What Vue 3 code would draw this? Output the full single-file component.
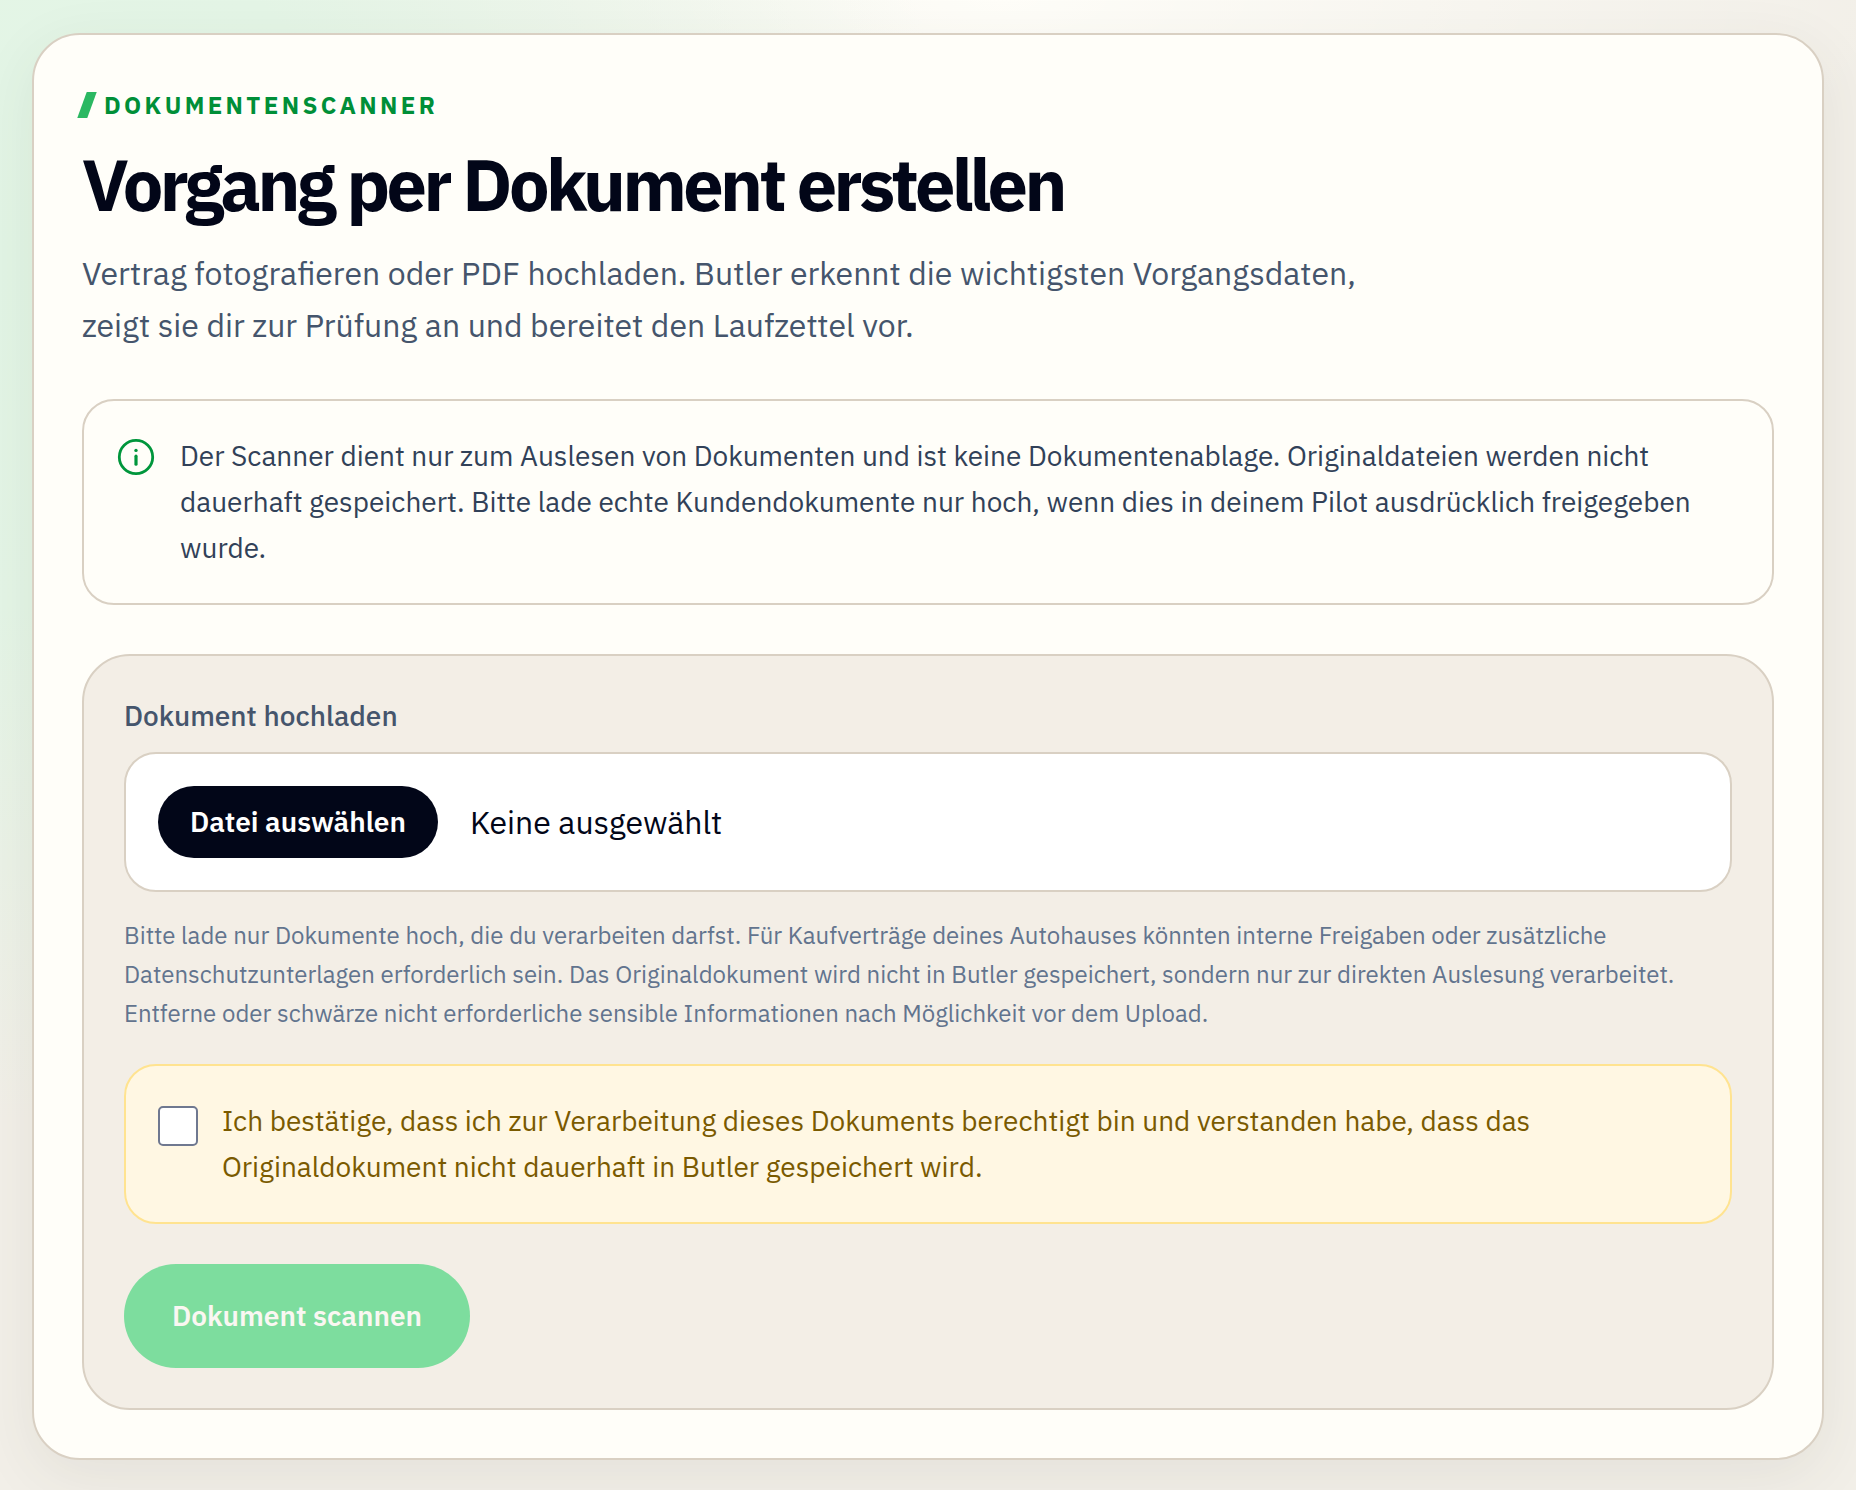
<script setup>
import { ref } from 'vue'

const fileInput = ref(null)
const fileName = ref('')
const confirmed = ref(false)

function onFileChange(event) {
  fileName.value = event.target.files[0]?.name ?? ''
}
</script>

<template>
  <div class="page">
    <main class="card">
      <p class="eyebrow">Dokumentenscanner</p>
      <h1 class="title">Vorgang per Dokument erstellen</h1>
      <p class="lead">
        Vertrag fotografieren oder PDF hochladen. Butler erkennt die wichtigsten Vorgangsdaten,
        zeigt sie dir zur Prüfung an und bereitet den Laufzettel vor.
      </p>

      <div class="notice">
        <svg class="notice-icon" viewBox="0 0 40 40" fill="none" aria-hidden="true">
          <circle cx="20" cy="20" r="16.7" stroke="currentColor" stroke-width="2.8" />
          <path d="M20 19.2v8" stroke="currentColor" stroke-width="3.2" stroke-linecap="round" />
          <circle cx="20" cy="13.4" r="1.7" fill="currentColor" />
        </svg>
        <p>
          Der Scanner dient nur zum Auslesen von Dokumenten und ist keine Dokumentenablage.
          Originaldateien werden nicht dauerhaft gespeichert. Bitte lade echte Kundendokumente nur
          hoch, wenn dies in deinem Pilot ausdrücklich freigegeben wurde.
        </p>
      </div>

      <form class="panel" @submit.prevent>
        <label class="field-label" for="document">Dokument hochladen</label>
        <div class="file-box">
          <input id="document" ref="fileInput" class="file-native" type="file" @change="onFileChange" />
          <button class="file-button" type="button" @click="fileInput.click()">Datei auswählen</button>
          <span>{{ fileName || 'Keine ausgewählt' }}</span>
        </div>
        <p class="hint">
          Bitte lade nur Dokumente hoch, die du verarbeiten darfst. Für Kaufverträge deines
          Autohauses könnten interne Freigaben oder zusätzliche Datenschutzunterlagen erforderlich
          sein. Das Originaldokument wird nicht in Butler gespeichert, sondern nur zur direkten
          Auslesung verarbeitet. Entferne oder schwärze nicht erforderliche sensible Informationen
          nach Möglichkeit vor dem Upload.
        </p>
        <label class="consent">
          <input v-model="confirmed" class="consent-check" type="checkbox" />
          <span>
            Ich bestätige, dass ich zur Verarbeitung dieses Dokuments berechtigt bin und verstanden
            habe, dass das Originaldokument nicht dauerhaft in Butler gespeichert wird.
          </span>
        </label>
        <button class="submit" type="submit" :disabled="!confirmed || !fileName">Dokument scannen</button>
      </form>
    </main>
  </div>
</template>

<style>
body {
  margin: 0;
  background: #f3efe6;
}
</style>

<style scoped>
* {
  box-sizing: border-box;
}

.page {
  min-height: 100vh;
  padding: 33px 32px 30px;
  overflow: hidden;
  font-family: "IBM Plex Sans", Roboto, sans-serif;
  font-size: 28px;
  line-height: 46px;
  color: #020618;
  background:
    radial-gradient(ellipse 960px 860px at 0 260px, #e2f5e5 0%, #e4f5e6 40%, rgba(228, 245, 230, 0) 100%),
    radial-gradient(ellipse 900px 300px at 54% 0, #fffef9 0%, rgba(255, 254, 249, 0) 100%),
    #f2efe8;
}

p,
h1 {
  margin: 0;
}

.card {
  padding: 48px;
  background: #fffef9;
  border: 2px solid #d9d0c3;
  border-radius: 48px;
  box-shadow: 0 16px 60px rgba(60, 60, 50, 0.08);
}

.eyebrow {
  display: flex;
  align-items: center;
  gap: 12px;
  font-size: 24px;
  line-height: 44px;
  font-weight: 700;
  letter-spacing: 0.14em;
  text-transform: uppercase;
  color: #008f38;
}

.eyebrow::before {
  content: "";
  width: 10px;
  height: 26px;
  background: #2bb862;
  transform: skewX(-20deg);
}

.title {
  margin: 18px 0 24px;
  font-size: 72px;
  line-height: 78px;
  font-weight: 700;
  letter-spacing: -0.05em;
}

.lead {
  max-width: 1344px;
  font-size: 32px;
  line-height: 52px;
  color: #45556c;
}

.notice {
  display: flex;
  align-items: flex-start;
  gap: 24px;
  margin-top: 48px;
  padding: 32px;
  border: 2px solid #d9d0c3;
  border-radius: 32px;
  color: #314158;
}

.notice-icon {
  flex: none;
  width: 40px;
  height: 40px;
  margin-top: 4px;
  color: #00963c;
}

.panel {
  display: flex;
  flex-direction: column;
  align-items: stretch;
  margin-top: 49px;
  padding: 40px;
  background: #f3eee6;
  border: 2px solid #d9d0c3;
  border-radius: 48px;
}

.field-label {
  line-height: 40px;
  font-weight: 500;
  color: #45556c;
}

.file-box {
  position: relative;
  display: flex;
  align-items: center;
  gap: 32px;
  margin-top: 16px;
  padding: 32px;
  font-size: 32px;
  line-height: 46px;
  background: #fff;
  border: 2px solid #d9d0c3;
  border-radius: 32px;
}

.file-native {
  position: absolute;
  inset: 0;
  width: 100%;
  opacity: 0;
  pointer-events: none;
}

.file-button {
  padding: 16px 32px;
  font: 600 28px/40px "IBM Plex Sans", Roboto, sans-serif;
  color: #fff;
  background: #020618;
  border: 0;
  border-radius: 36px;
}

.hint {
  margin-top: 24px;
  font-size: 24px;
  line-height: 39px;
  color: #62748e;
}

.consent {
  display: flex;
  align-items: flex-start;
  gap: 24px;
  margin-top: 31px;
  padding: 32px;
  color: #7a5a00;
  background: #fff7e3;
  border: 2px solid #ffe390;
  border-radius: 32px;
}

.consent-check {
  flex: none;
  appearance: none;
  width: 40px;
  height: 40px;
  margin: 8px 0 0;
  background: #fff;
  border: 2px solid #6f7890;
  border-radius: 5px;
}

.consent-check:checked {
  background: #009a3e;
}

.submit {
  align-self: flex-start;
  margin-top: 40px;
  padding: 32px 48px;
  font: 600 28px/40px "IBM Plex Sans", Roboto, sans-serif;
  color: #fff;
  background: #05c860;
  border: 0;
  border-radius: 52px;
}

.submit:disabled {
  color: #faf7f2;
  background: #7ddd9e;
}
</style>
